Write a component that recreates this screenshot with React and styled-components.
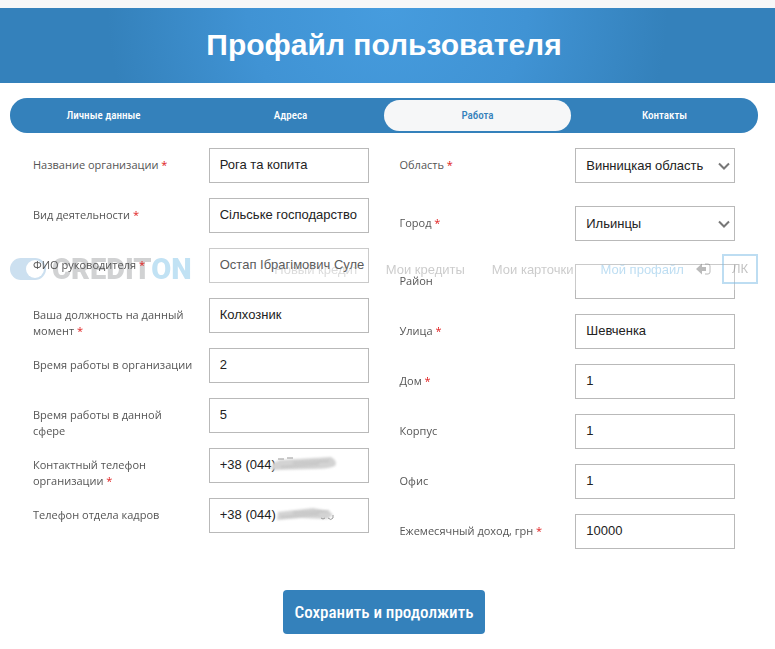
import React, { useState } from 'react';
import styled, { createGlobalStyle, ThemeProvider } from 'styled-components';

const theme = {
  mainColor: '#3481bb',
  lightColor: '#f6f7f8',
  borderColor: '#b9b9b9',
  narrow: "'Roboto Condensed', 'Liberation Sans Narrow', 'Liberation Sans', sans-serif",
};

const tabs = ['Личные данные', 'Адреса', 'Работа', 'Контакты'];

const menu = [
  { name: 'Новый кредит', faint: true },
  { name: 'Мои кредиты' },
  { name: 'Мои карточки' },
  { name: 'Мой профайл', active: true },
];

const jobFields = [
  { id: 'company', label: 'Название организации', required: true, value: 'Рога та копита' },
  { id: 'activity', label: 'Вид деятельности', required: true, value: 'Сільське господарство' },
  { id: 'head', label: 'ФИО руководителя', required: true, value: 'Остап Ібрагімович Суле' },
  { id: 'position', label: 'Ваша должность на данный момент', required: true, value: 'Колхозник' },
  { id: 'companyTime', label: 'Время работы в организации', value: '2' },
  { id: 'sphereTime', label: 'Время работы в данной сфере', value: '5' },
  {
    id: 'phone',
    label: 'Контактный телефон организации',
    required: true,
    value: '+38 (044)',
    smudge: 'M4 10 L11 7 L62 4 Q69 8 66 13 Q60 16 44 16 L2 17 Z',
    traces: 'M9 6 h6 M18 5 h6',
  },
  {
    id: 'hrPhone',
    label: 'Телефон отдела кадров',
    value: '+38 (044)',
    smudge: 'M9 9 L44 5 L60 8 L64 12 L58 16 L32 15 L8 17 Z',
    traces: 'M52 15 q2 2 4 0 M59 15 q3 3 5 0 v-3',
  },
];

const addressFields = [
  { id: 'region', label: 'Область', required: true, options: ['Винницкая область'] },
  { id: 'city', label: 'Город', required: true, options: ['Ильинцы'] },
  { id: 'district', label: 'Район', value: '' },
  { id: 'street', label: 'Улица', required: true, value: 'Шевченка' },
  { id: 'house', label: 'Дом', required: true, value: '1' },
  { id: 'building', label: 'Корпус', value: '1' },
  { id: 'office', label: 'Офис', value: '1' },
  { id: 'income', label: 'Ежемесячный доход, грн', required: true, value: '10000' },
];

const Field = ({ field }) => (
  <Row $wide={!!field.options}>
    <Label htmlFor={field.id}>
      {field.label}
      {field.required && <Star> *</Star>}
    </Label>
    <Control>
      {field.options ? (
        <>
          <Select id={field.id}>
            {field.options.map((it) => (
              <option key={it}>{it}</option>
            ))}
          </Select>
          <Chevron viewBox="0 0 12 8">
            <path d="M1 1.5 L6 6.5 L11 1.5" />
          </Chevron>
        </>
      ) : (
        <Input id={field.id} type="text" defaultValue={field.value} />
      )}
      {field.smudge && (
        <Smudge viewBox="0 0 72 24">
          <path className="body" d={field.smudge} />
          <path className="streak" d="M12 14 L50 11 M24 10 L60 8" />
          <path className="trace" d={field.traces} />
        </Smudge>
      )}
    </Control>
  </Row>
);

const SiteHeader = () => (
  <HeaderBar>
    <Logo href="#">
      <LogoMark viewBox="0 0 36 22">
        <rect x="0" y="0" width="36" height="22" rx="11" fill="#7fb0d8" />
        <circle cx="25" cy="11" r="9" fill="#fff" />
      </LogoMark>
      <LogoText>
        CREDIT<b>ON</b>
      </LogoText>
    </Logo>
    <Menu>
      {menu.map((it) => (
        <MenuLink key={it.name} href="#" $active={it.active} $faint={it.faint}>
          {it.name}
        </MenuLink>
      ))}
      <Exit href="#" aria-label="Выход">
        <svg width="15" height="12" viewBox="0 0 15 12">
          <path d="M0 6 L6 0.5 V4 H10 V8 H6 V11.5 Z" fill="#777" />
          <path d="M9 1 H12 Q14 1 14 3 V9 Q14 11 12 11 H9" fill="none" stroke="#777" />
        </svg>
      </Exit>
      <Cabinet href="#">ЛК</Cabinet>
    </Menu>
  </HeaderBar>
);

const App = () => {
  const [tab, setTab] = useState('Работа');

  return (
    <ThemeProvider theme={theme}>
      <GlobalStyle />
      <Banner>
        <Title>Профайл пользователя</Title>
      </Banner>
      <Content>
        <Tabs>
          {tabs.map((it) => (
            <Tab key={it} type="button" $active={it === tab} onClick={() => setTab(it)}>
              {it}
            </Tab>
          ))}
        </Tabs>
        <Form onSubmit={(e) => e.preventDefault()}>
          <Columns>
            <Column>
              {jobFields.map((it) => (
                <Field key={it.id} field={it} />
              ))}
            </Column>
            <Column>
              {addressFields.map((it) => (
                <Field key={it.id} field={it} />
              ))}
            </Column>
          </Columns>
          <Submit type="submit">Сохранить и продолжить</Submit>
        </Form>
      </Content>
      <SiteHeader />
    </ThemeProvider>
  );
};

export default App;

const GlobalStyle = createGlobalStyle`
  * {
    box-sizing: border-box;
  }

  body {
    margin: 0;
    background: #fff;
    font-family: 'Liberation Sans', Arial, sans-serif;
  }
`;

const Banner = styled.header`
  border-top: 8px solid ${(props) => props.theme.lightColor};
  padding: 17px 17px 18px 10px;
  background: radial-gradient(circle 280px at 50% 0, #469cde, #4093d4 50%, #3481bb) padding-box;
`;

const Title = styled.h1`
  margin: 0;
  font-size: 30px;
  line-height: 40px;
  color: #fff;
  text-align: center;
`;

const Content = styled.main`
  padding: 15px 17px 15px 10px;
`;

const Tabs = styled.nav`
  display: flex;
  padding: 2px 0;
  border-radius: 17px;
  background: ${(props) => props.theme.mainColor};
`;

const Tab = styled.button`
  flex: 1;
  height: 31px;
  padding: 0;
  border: 0;
  border-radius: 16px;
  background: ${(props) => (props.$active ? props.theme.lightColor : 'transparent')};
  color: ${(props) => (props.$active ? props.theme.mainColor : '#fff')};
  font: 500 11px ${(props) => props.theme.narrow};
  cursor: pointer;
`;

const Form = styled.form`
  display: flex;
  flex-direction: column;
  align-items: center;
  gap: 41px;
  padding: 15px 23px 0;
`;

const Columns = styled.div`
  display: grid;
  grid-template-columns: 1fr 1fr;
  gap: 31px;
  width: 100%;
`;

const Column = styled.div`
  display: flex;
  flex-direction: column;
  gap: 15px;
`;

const Row = styled.div`
  display: grid;
  grid-template-columns: 11fr 10fr;
  height: 35px;
  margin-bottom: ${(props) => (props.$wide ? '8px' : 0)};
`;

/* stays readable above the floating header */
const Label = styled.label`
  position: relative;
  z-index: 2;
  padding: 9px 14px 0 0;
  font-family: 'Open Sans', 'Noto Sans', sans-serif;
  font-size: 11px;
  line-height: 16px;
  color: #555;
`;

const Star = styled.span`
  color: #e02020;
`;

const Control = styled.div`
  position: relative;
`;

const Input = styled.input`
  display: block;
  width: 100%;
  height: 35px;
  padding: 0 0 2px 10px;
  border: 1px solid ${(props) => props.theme.borderColor};
  border-radius: 0;
  background: #fff;
  color: #222;
  font: 13px 'Liberation Sans', Arial, sans-serif;
`;

const Select = styled(Input).attrs({ as: 'select' })`
  padding-bottom: 0;
  appearance: none;
`;

const Chevron = styled.svg`
  position: absolute;
  top: 14px;
  right: 5px;
  width: 12px;
  height: 8px;
  pointer-events: none;
  fill: none;
  stroke: #777;
  stroke-width: 2;
`;

const Smudge = styled.svg`
  position: absolute;
  top: 5px;
  left: 60px;
  width: 72px;
  height: 24px;
  pointer-events: none;

  .body {
    fill: #d3d3d3;
    filter: blur(1px);
  }
  .streak {
    fill: none;
    stroke: #bbb;
    filter: blur(1px);
  }
  .trace {
    fill: none;
    stroke: #999;
  }
`;

const Submit = styled.button`
  padding: 0 12px;
  height: 44px;
  border: 0;
  border-radius: 4px;
  background: ${(props) => props.theme.mainColor};
  color: #fff;
  font: 500 17px ${(props) => props.theme.narrow};
  cursor: pointer;
`;

/* translucent site header that floats over the form */
const HeaderBar = styled.div`
  position: fixed;
  z-index: 1;
  top: 248px;
  left: 0;
  right: 0;
  display: flex;
  align-items: center;
  justify-content: space-between;
  height: 42px;
  padding: 0 17px 0 10px;
  background: rgba(255, 255, 255, 0.25);
  pointer-events: none;
`;

const Logo = styled.a`
  display: flex;
  align-items: center;
  gap: 6px;
  text-decoration: none;
  opacity: 0.4;
`;

const LogoMark = styled.svg`
  width: 36px;
  height: 22px;
`;

const LogoText = styled.span`
  font: 900 29px Roboto, sans-serif;
  color: #8c8f92;

  b {
    font-weight: 900;
    color: #65b5e3;
  }
`;

const Menu = styled.nav`
  display: flex;
  align-items: center;
  opacity: 0.5;
`;

const MenuLink = styled.a`
  margin-right: 27px;
  font-size: 13px;
  color: ${(props) => (props.$active ? '#7dbde6' : '#999')};
  opacity: ${(props) => (props.$faint ? 0.7 : 1)};
  text-decoration: none;

  &:nth-child(4) {
    margin-right: 12px;
  }
`;

const Exit = styled.a`
  display: flex;
  margin-right: 11px;
`;

const Cabinet = styled.a`
  padding: 0 8px;
  border: 2px solid #7dbde6;
  font-size: 13px;
  line-height: 26px;
  color: #888;
  text-decoration: none;
`;
